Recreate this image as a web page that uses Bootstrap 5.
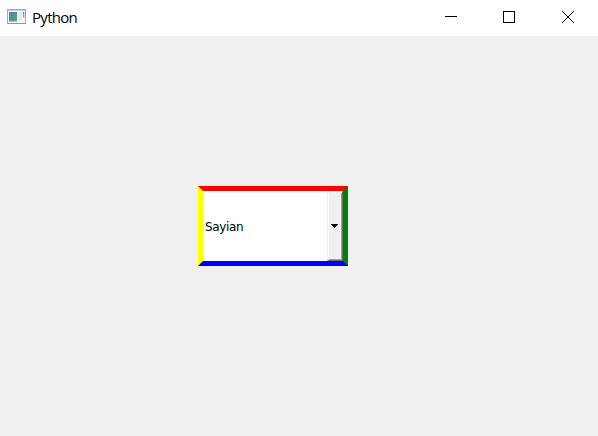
<!DOCTYPE html>
<html lang="en">
<head>
<meta charset="utf-8">
<title>Python</title>
<link href="https://cdn.jsdelivr.net/npm/bootstrap@5.3.0/dist/css/bootstrap.min.css" rel="stylesheet">
<style>
body{background:#f0f0f0;color:#000;font-family:"Open Sans","Noto Sans",sans-serif}
.titlebar{height:36px}
.app-icon{margin-left:7px;margin-top:-3px}
.app-title{font-size:15px;line-height:20px;margin:-2px 0 0 6px;letter-spacing:-.7px}
.win-btn{width:58px;height:36px}
.combo{width:150px;height:80px;margin:150px 0 0 198px;border:5px solid;border-color:red green blue yellow}
.combo-text{font-family:"DejaVu Sans",sans-serif;font-size:12px;letter-spacing:-.35px;line-height:16px;padding:2px 0 0 2px}
.combo-drop{width:16px;padding-right:1px;background:#f0f0f0;border:1px solid;border-color:#f0f0f0 #696969 #696969 #f0f0f0;box-shadow:inset 1px 1px #fff,inset -1px -1px #a0a0a0}
</style>
</head>
<body class="vh-100 overflow-hidden d-flex flex-column">
<header class="titlebar bg-white d-flex align-items-center flex-shrink-0">
<svg class="app-icon" width="19" height="16" viewBox="0 0 19 16">
<defs><linearGradient id="g" x1="0" y1="0" x2=".6" y2="1"><stop offset="0" stop-color="#4d84a8"/><stop offset="1" stop-color="#55a583"/></linearGradient>
<linearGradient id="b" x1="0" y1="0" x2="0" y2="1"><stop offset="0" stop-color="#5577b8"/><stop offset="1" stop-color="#8ccba4"/></linearGradient></defs>
<rect x=".5" y=".5" width="18" height="14" fill="#f6f6f8" stroke="#a5a9b0"/>
<path d="M1 1.5h17" stroke="#c9cdd4"/>
<path d="M0 14.5h19" stroke="#92969c"/>
<rect x="2" y="3" width="8" height="9.5" fill="url(#g)"/>
<rect x="11" y="3" width="4" height="9" fill="#e7e9ed"/>
<rect x="16" y="3" width="1.3" height="6" fill="url(#b)"/>
</svg>
<div class="app-title">Python</div>
<div class="d-flex ms-auto">
<svg class="win-btn" viewBox="0 0 58 36"><path d="M21 16.5h12" stroke="#000"/></svg>
<svg class="win-btn" viewBox="0 0 58 36"><rect x="21.5" y="11.5" width="11" height="11" fill="none" stroke="#000"/></svg>
<svg class="win-btn" viewBox="0 0 58 36"><path d="M22 11l12 12M34 11l-12 12" stroke="#000"/></svg>
</div>
</header>
<main class="flex-grow-1 d-flex align-items-start">
<div class="combo bg-white d-flex align-items-stretch">
<div class="combo-text flex-grow-1 align-self-center">Sayian</div>
<div class="combo-drop d-flex align-items-center justify-content-center">
<svg width="7" height="4" viewBox="0 0 7 4" shape-rendering="crispEdges"><path d="M0 0h7v1H6v1H5v1H4v1H3V3H2V2H1V1H0z"/></svg>
</div>
</div>
</main>
<script src="https://cdn.jsdelivr.net/npm/bootstrap@5.3.0/dist/js/bootstrap.bundle.min.js"></script>
</body>
</html>
